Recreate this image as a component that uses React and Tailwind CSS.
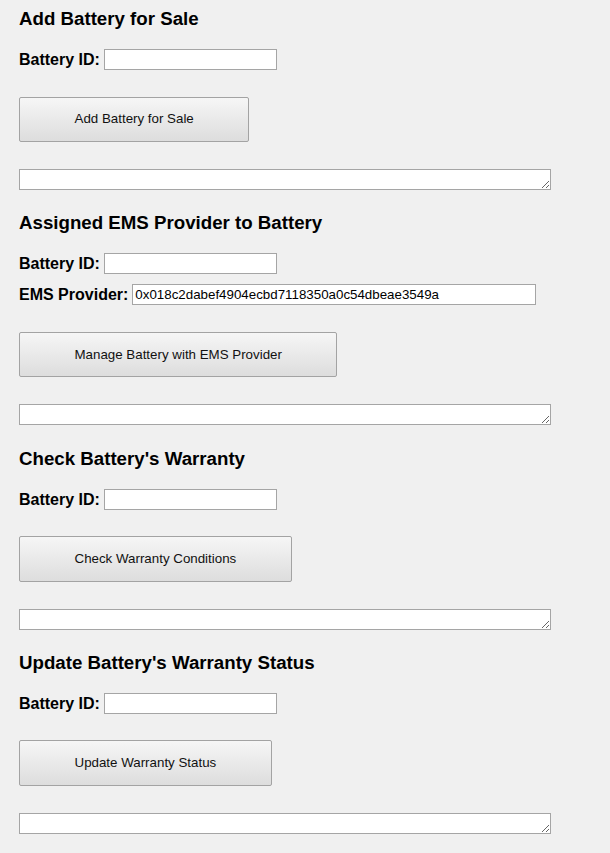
import React, { useState } from 'react';

const font = { fontFamily: '"Liberation Sans", Arial, sans-serif' };

// one labelled text field in a row
const Field = ({ label, value, onChange, inputClass }) => (
  <div className="flex items-center h-[21px]">
    <label className="text-[16px] font-bold text-black leading-[21px] mr-[4px]">{label}</label>
    <input
      type="text"
      value={value}
      onChange={onChange}
      className={`h-[21px] bg-white border border-[#a5a5a5] px-[2px] text-[13.33px] text-black outline-none ${inputClass}`}
    />
  </div>
);

const ActionButton = ({ children, onClick }) => (
  <button
    onClick={onClick}
    className="mt-[26.5px] h-[45.5px] px-[54.5px] text-[13.33px] text-[#111] border border-[#a3a3a3] rounded-[2px] bg-gradient-to-b from-[#f6f6f6] to-[#dddddd] self-start"
  >
    {children}
  </button>
);

const Output = ({ value }) => (
  <textarea
    readOnly
    value={value}
    rows={1}
    className="mt-[27px] w-[532px] h-[21px] bg-white border border-[#a5a5a5] block text-[13.33px] resize-y"
  />
);

const Section = ({ title, children, first }) => (
  <div className={`flex flex-col ${first ? 'pt-[8px]' : 'pt-[22.33px]'}`}>
    <h2 className="text-[18.7px] font-bold leading-[21px] text-black mb-[20px]">{title}</h2>
    {children}
  </div>
);

const App = () => {
  const [saleId, setSaleId] = useState('');
  const [emsId, setEmsId] = useState('');
  const [emsProvider, setEmsProvider] = useState('0x018c2dabef4904ecbd7118350a0c54dbeae3549a');
  const [warrantyId, setWarrantyId] = useState('');
  const [statusId, setStatusId] = useState('');
  const [results, setResults] = useState({ sale: '', ems: '', warranty: '', status: '' });

  return (
    <div className="min-h-[853px] w-full bg-[#f0f0f0] px-[19px]" style={font}>
      <Section title="Add Battery for Sale" first>
        <Field label="Battery ID:" value={saleId} onChange={(e) => setSaleId(e.target.value)} inputClass="w-[173px]" />
        <ActionButton onClick={() => setResults((r) => ({ ...r, sale: '' }))}>Add Battery for Sale</ActionButton>
        <Output value={results.sale} />
      </Section>

      <Section title="Assigned EMS Provider to Battery">
        <Field label="Battery ID:" value={emsId} onChange={(e) => setEmsId(e.target.value)} inputClass="w-[173px]" />
        <div className="mt-[10px]">
          <Field label="EMS Provider:" value={emsProvider} onChange={(e) => setEmsProvider(e.target.value)} inputClass="w-[404px]" />
        </div>
        <ActionButton onClick={() => setResults((r) => ({ ...r, ems: '' }))}>Manage Battery with EMS Provider</ActionButton>
        <Output value={results.ems} />
      </Section>

      <Section title="Check Battery's Warranty">
        <Field label="Battery ID:" value={warrantyId} onChange={(e) => setWarrantyId(e.target.value)} inputClass="w-[173px]" />
        <ActionButton onClick={() => setResults((r) => ({ ...r, warranty: '' }))}>Check Warranty Conditions</ActionButton>
        <Output value={results.warranty} />
      </Section>

      <Section title="Update Battery's Warranty Status">
        <Field label="Battery ID:" value={statusId} onChange={(e) => setStatusId(e.target.value)} inputClass="w-[173px]" />
        <ActionButton onClick={() => setResults((r) => ({ ...r, status: '' }))}>Update Warranty Status</ActionButton>
        <Output value={results.status} />
      </Section>
    </div>
  );
};

export default App;
